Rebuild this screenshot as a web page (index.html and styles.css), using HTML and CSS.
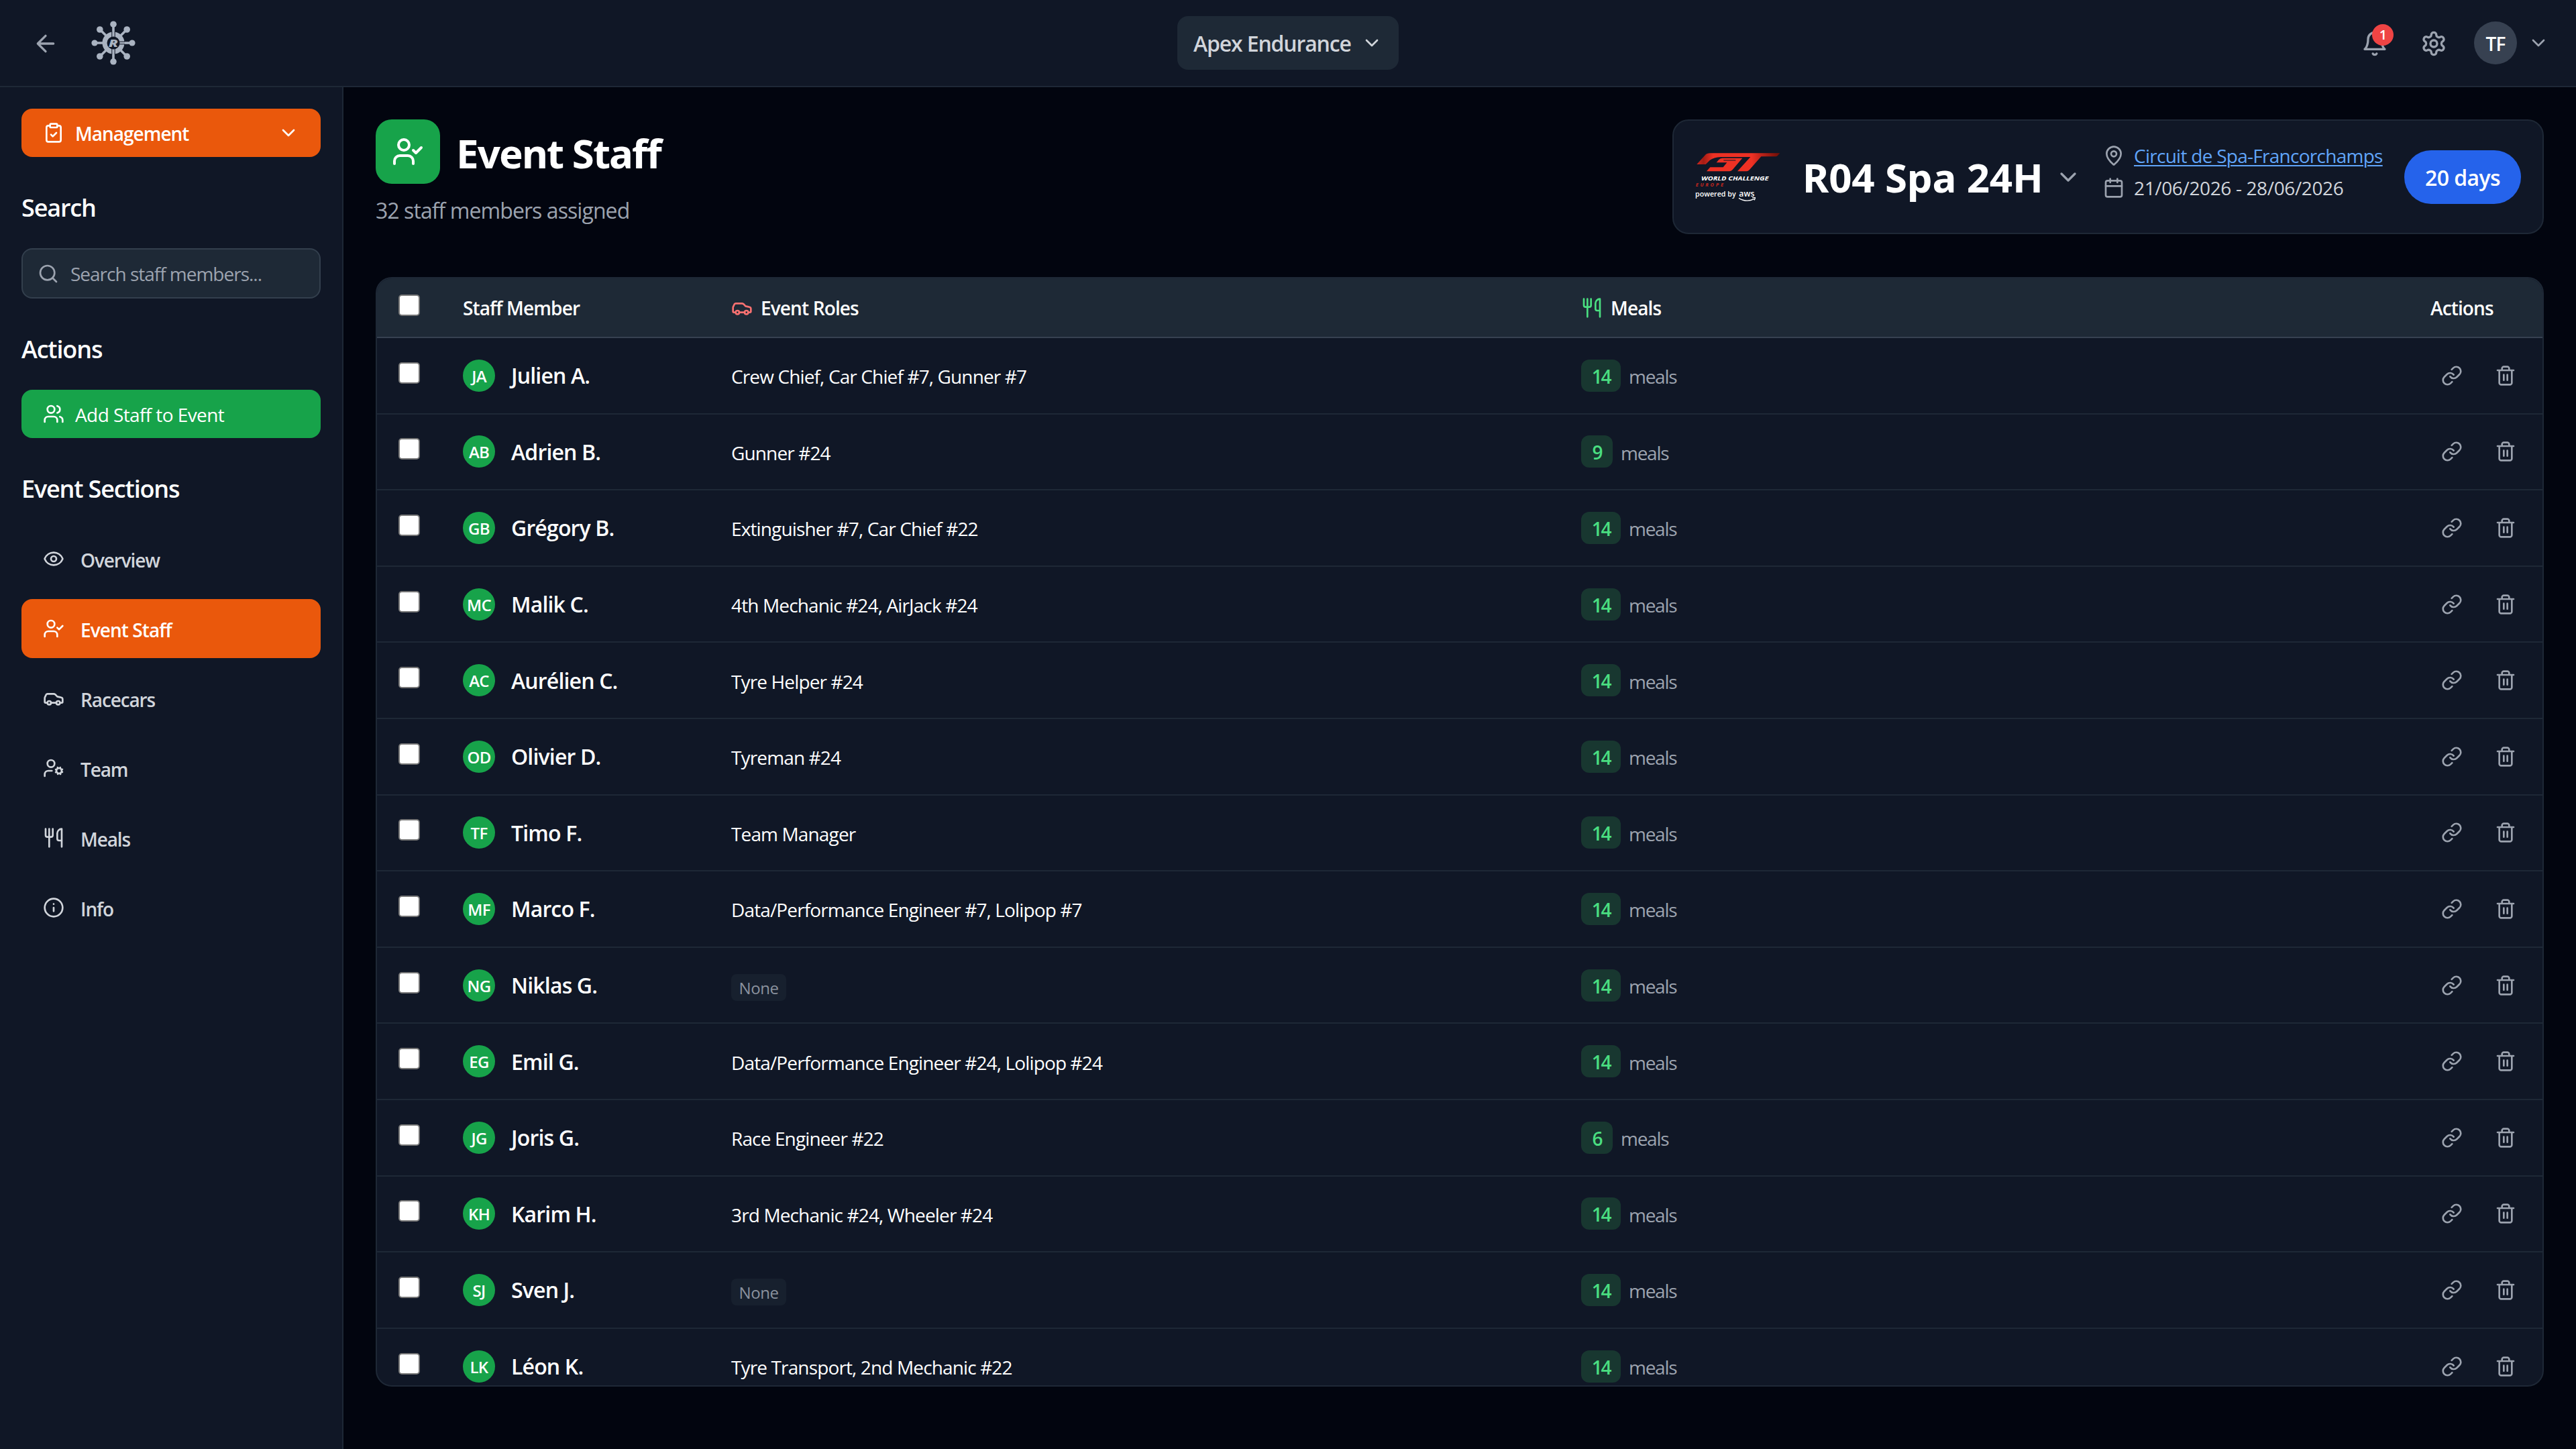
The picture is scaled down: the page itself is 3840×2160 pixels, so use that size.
FILE: index.html
```html
<!DOCTYPE html>
<html lang="en">
<head>
<meta charset="utf-8">
<title>Event Staff</title>
<link rel="stylesheet" href="styles.css">
</head>
<body>
<svg class="sprite" aria-hidden="true">
  <symbol id="i-back" viewBox="0 0 24 24"><path d="m12 19-7-7 7-7M19 12H5"/></symbol>
  <symbol id="i-down" viewBox="0 0 24 24"><path d="m6 9 6 6 6-6"/></symbol>
  <symbol id="i-bell" viewBox="0 0 24 24"><path d="M6 8a6 6 0 0 1 12 0c0 7 3 9 3 9H3s3-2 3-9M10.3 21a1.94 1.94 0 0 0 3.4 0"/></symbol>
  <symbol id="i-gear" viewBox="0 0 24 24"><path d="M12.22 2h-.44a2 2 0 0 0-2 2v.18a2 2 0 0 1-1 1.73l-.43.25a2 2 0 0 1-2 0l-.15-.08a2 2 0 0 0-2.73.73l-.22.38a2 2 0 0 0 .73 2.73l.15.1a2 2 0 0 1 1 1.72v.51a2 2 0 0 1-1 1.74l-.15.09a2 2 0 0 0-.73 2.73l.22.38a2 2 0 0 0 2.73.73l.15-.08a2 2 0 0 1 2 0l.43.25a2 2 0 0 1 1 1.73V20a2 2 0 0 0 2 2h.44a2 2 0 0 0 2-2v-.18a2 2 0 0 1 1-1.73l.43-.25a2 2 0 0 1 2 0l.15.08a2 2 0 0 0 2.73-.73l.22-.39a2 2 0 0 0-.73-2.73l-.15-.08a2 2 0 0 1-1-1.74v-.5a2 2 0 0 1 1-1.74l.15-.09a2 2 0 0 0 .73-2.73l-.22-.38a2 2 0 0 0-2.73-.73l-.15.08a2 2 0 0 1-2 0l-.43-.25a2 2 0 0 1-1-1.73V4a2 2 0 0 0-2-2z"/><circle cx="12" cy="12" r="3"/></symbol>
  <symbol id="i-clip" viewBox="0 0 24 24"><rect x="8" y="2" width="8" height="4" rx="1"/><path d="M16 4h2a2 2 0 0 1 2 2v14a2 2 0 0 1-2 2H6a2 2 0 0 1-2-2V6a2 2 0 0 1 2-2h2M9 14l2 2 4-4"/></symbol>
  <symbol id="i-search" viewBox="0 0 24 24"><circle cx="11" cy="11" r="8"/><path d="m21 21-4.3-4.3"/></symbol>
  <symbol id="i-users" viewBox="0 0 24 24"><path d="M16 21v-2a4 4 0 0 0-4-4H6a4 4 0 0 0-4 4v2M22 21v-2a4 4 0 0 0-3-3.87M16 3.13a4 4 0 0 1 0 7.75"/><circle cx="9" cy="7" r="4"/></symbol>
  <symbol id="i-eye" viewBox="0 0 24 24"><path d="M2.062 12.348a1 1 0 0 1 0-.696 10.75 10.75 0 0 1 19.876 0 1 1 0 0 1 0 .696 10.75 10.75 0 0 1-19.876 0"/><circle cx="12" cy="12" r="3"/></symbol>
  <symbol id="i-check" viewBox="0 0 24 24"><path d="M16 21v-2a4 4 0 0 0-4-4H6a4 4 0 0 0-4 4v2M16 11l2 2 4-4"/><circle cx="9" cy="7" r="4"/></symbol>
  <symbol id="i-car" viewBox="0 0 24 24"><path d="M19 17h2c.6 0 1-.4 1-1v-3c0-.9-.7-1.7-1.5-1.9C18.7 10.6 16 10 16 10s-1.3-1.4-2.2-2.3c-.5-.4-1.1-.7-1.8-.7H5c-.6 0-1.1.4-1.4.9l-1.4 2.9A3.7 3.7 0 0 0 2 12v4c0 .6.4 1 1 1h2M9 17h6"/><circle cx="7" cy="17" r="2"/><circle cx="17" cy="17" r="2"/></symbol>
  <symbol id="i-cog" viewBox="0 0 24 24"><circle cx="18" cy="15" r="3"/><circle cx="9" cy="7" r="4"/><path d="M10 15H6a4 4 0 0 0-4 4v2M21.7 16.4l-.9-.3M15.2 13.9l-.9-.3M16.6 18.7l.3-.9M19.1 12.2l.3-.9M19.6 18.7l-.4-1M16.8 12.3l-.4-1M14.3 16.6l1-.4M20.7 13.8l1-.4"/></symbol>
  <symbol id="i-food" viewBox="0 0 24 24"><path d="M3 2v7c0 1.1.9 2 2 2h4a2 2 0 0 0 2-2V2M7 2v20M21 15V2a5 5 0 0 0-5 5v6c0 1.1.9 2 2 2h3Zm0 0v7"/></symbol>
  <symbol id="i-info" viewBox="0 0 24 24"><circle cx="12" cy="12" r="10"/><path d="M12 16v-4M12 8h.01"/></symbol>
  <symbol id="i-pin" viewBox="0 0 24 24"><path d="M20 10c0 4.993-5.539 10.193-7.399 11.799a1 1 0 0 1-1.202 0C9.539 20.193 4 14.993 4 10a8 8 0 0 1 16 0"/><circle cx="12" cy="10" r="3"/></symbol>
  <symbol id="i-cal" viewBox="0 0 24 24"><path d="M8 2v4M16 2v4M3 10h18"/><rect x="3" y="4" width="18" height="18" rx="2"/></symbol>
  <symbol id="i-link" viewBox="0 0 24 24"><path d="M10 13a5 5 0 0 0 7.54.54l3-3a5 5 0 0 0-7.07-7.07l-1.72 1.71"/><path d="M14 11a5 5 0 0 0-7.54-.54l-3 3a5 5 0 0 0 7.07 7.07l1.71-1.71"/></symbol>
  <symbol id="i-trash" viewBox="0 0 24 24"><path d="M3 6h18M19 6v14c0 1-1 2-2 2H7c-1 0-2-1-2-2V6M8 6V4c0-1 1-2 2-2h4c1 0 2 1 2 2v2M10 11v6M14 11v6"/></symbol>
</svg>

<header class="topbar">
  <div class="topbar-left">
    <svg class="icon icon-md"><use href="#i-back"/></svg>
    <svg class="brand" viewBox="0 0 66 66">
      <g stroke="#aab3c1" stroke-width="3.6"><path d="M33 4V21M33 45V62M5 33H21M44 33H61M12.5 12.5 24 24M42 42 53.5 53.5M53.5 12.5 42 24M24 42 12.5 53.5"/></g>
      <circle cx="33" cy="33" r="13" fill="none" stroke="#aab3c1" stroke-width="7"/>
      <path d="M30.8 16V25M35.2 16V25M30.8 41V50M35.2 41V50M42 31.2H50M42 34.8H50" stroke="#101726" stroke-width="1"/>
      <g fill="#aab3c1"><circle cx="33" cy="5.2" r="4.8"/><circle cx="33" cy="60.8" r="4.8"/><circle cx="5" cy="33" r="4.6"/><circle cx="61" cy="33" r="4.6"/><circle cx="12.8" cy="13" r="4.8"/><circle cx="53.2" cy="13" r="4.8"/><circle cx="12.8" cy="53" r="4.8"/><circle cx="53.2" cy="53" r="4.8"/></g>
      <text x="33" y="38.6" textLength="14" lengthAdjust="spacingAndGlyphs" class="brand-letter">R</text>
    </svg>
  </div>
  <button class="team-switch"><span class="team-name">Apex Endurance</span><svg class="icon"><use href="#i-down"/></svg></button>
  <div class="topbar-right">
    <div class="bell"><svg class="icon icon-md"><use href="#i-bell"/></svg><span class="bell-count">1</span></div>
    <svg class="icon icon-md gear"><use href="#i-gear"/></svg>
    <span class="me">TF</span>
    <svg class="icon"><use href="#i-down"/></svg>
  </div>
</header>

<div class="body">
  <aside class="sidebar">
    <button class="side-btn orange"><svg class="icon"><use href="#i-clip"/></svg><span class="grow">Management</span><svg class="icon"><use href="#i-down"/></svg></button>
    <h2>Search</h2>
    <div class="search"><svg class="icon"><use href="#i-search"/></svg><span>Search staff members...</span></div>
    <h2>Actions</h2>
    <button class="side-btn green"><svg class="icon"><use href="#i-users"/></svg><span>Add Staff to Event</span></button>
    <h2>Event Sections</h2>
    <nav class="nav">
      <a class="nav-item"><svg class="icon"><use href="#i-eye"/></svg><span>Overview</span></a>
      <a class="nav-item active"><svg class="icon"><use href="#i-check"/></svg><span>Event Staff</span></a>
      <a class="nav-item"><svg class="icon"><use href="#i-car"/></svg><span>Racecars</span></a>
      <a class="nav-item"><svg class="icon"><use href="#i-cog"/></svg><span>Team</span></a>
      <a class="nav-item"><svg class="icon"><use href="#i-food"/></svg><span>Meals</span></a>
      <a class="nav-item"><svg class="icon"><use href="#i-info"/></svg><span>Info</span></a>
    </nav>
  </aside>

  <main class="main">
    <div class="page-head">
      <div>
        <div class="title-row">
          <span class="title-icon"><svg class="icon icon-lg"><use href="#i-check"/></svg></span>
          <h1>Event Staff</h1>
        </div>
        <p class="subtitle">32 staff members assigned</p>
      </div>
      <section class="event-card">
        <svg class="series" viewBox="51 69 384 240">
          <defs>
            <linearGradient id="gt" x1="0" x2="1" y1="0" y2="0">
              <stop offset="0" stop-color="#d3281f"/><stop offset=".08" stop-color="#a31c14"/><stop offset=".2" stop-color="#ee3124"/><stop offset=".66" stop-color="#ee3124"/><stop offset=".76" stop-color="#c4251b"/><stop offset="1" stop-color="#6d0d05"/>
            </linearGradient>
          </defs>
          <path fill="url(#gt)" d="M58 132 94 92Q103 82 118 82H430L419 94Q416 97 412 97H346L294 156Q288 163 280 163H240L298 99H165Q134 100 116 114L98 132Z"/>
          <path fill="#ee3124" d="M172 104H262L218 156Q212 163 203 163H102L118 145H176L193 124H146L156 112Q162 104 172 104Z"/>
          <path stroke="#101726" stroke-width="3" d="M178 114H232"/>
          <text x="78" y="203" class="s-world" textLength="301" lengthAdjust="spacingAndGlyphs">WORLD CHALLENGE</text>
          <text x="53" y="230" class="s-europe" textLength="124" lengthAdjust="spacing">EUROPE</text>
          <text x="51" y="275" class="s-pow" textLength="182" lengthAdjust="spacingAndGlyphs">powered by</text>
          <text x="247" y="275" class="s-aws" textLength="69" lengthAdjust="spacingAndGlyphs">aws</text>
          <path fill="none" stroke="#fff" stroke-width="4" d="M246 283Q280 304 314 287M306 281H319Q319 286 315 292"/>
        </svg>
        <span class="event-name">R04 Spa 24H</span>
        <svg class="icon icon-md event-caret"><use href="#i-down"/></svg>
        <div class="event-meta">
          <div><svg class="icon"><use href="#i-pin"/></svg><a class="circuit">Circuit de Spa-Francorchamps</a></div>
          <div><svg class="icon"><use href="#i-cal"/></svg><span class="dates">21/06/2026 - 28/06/2026</span></div>
        </div>
        <span class="days">20 days</span>
      </section>
    </div>

    <section class="table">
      <div class="row head">
        <input type="checkbox"><span>Staff Member</span>
        <span class="th"><svg class="icon red"><use href="#i-car"/></svg>Event Roles</span>
        <span class="th meals-th"><svg class="icon lime"><use href="#i-food"/></svg>Meals</span>
        <span>Actions</span>
      </div>
      <div class="row"><input type="checkbox"><div class="who"><i>JA</i>Julien A.</div><div class="roles">Crew Chief, Car Chief #7, Gunner #7</div><div class="meals"><b>14</b><span>meals</span></div><div class="acts"><svg class="icon"><use href="#i-link"/></svg><svg class="icon"><use href="#i-trash"/></svg></div></div>
      <div class="row"><input type="checkbox"><div class="who"><i>AB</i>Adrien B.</div><div class="roles">Gunner #24</div><div class="meals"><b class="one">9</b><span>meals</span></div><div class="acts"><svg class="icon"><use href="#i-link"/></svg><svg class="icon"><use href="#i-trash"/></svg></div></div>
      <div class="row"><input type="checkbox"><div class="who"><i>GB</i>Grégory B.</div><div class="roles">Extinguisher #7, Car Chief #22</div><div class="meals"><b>14</b><span>meals</span></div><div class="acts"><svg class="icon"><use href="#i-link"/></svg><svg class="icon"><use href="#i-trash"/></svg></div></div>
      <div class="row"><input type="checkbox"><div class="who"><i>MC</i>Malik C.</div><div class="roles">4th Mechanic #24, AirJack #24</div><div class="meals"><b>14</b><span>meals</span></div><div class="acts"><svg class="icon"><use href="#i-link"/></svg><svg class="icon"><use href="#i-trash"/></svg></div></div>
      <div class="row"><input type="checkbox"><div class="who"><i>AC</i>Aurélien C.</div><div class="roles">Tyre Helper #24</div><div class="meals"><b>14</b><span>meals</span></div><div class="acts"><svg class="icon"><use href="#i-link"/></svg><svg class="icon"><use href="#i-trash"/></svg></div></div>
      <div class="row"><input type="checkbox"><div class="who"><i>OD</i>Olivier D.</div><div class="roles">Tyreman #24</div><div class="meals"><b>14</b><span>meals</span></div><div class="acts"><svg class="icon"><use href="#i-link"/></svg><svg class="icon"><use href="#i-trash"/></svg></div></div>
      <div class="row"><input type="checkbox"><div class="who"><i>TF</i>Timo F.</div><div class="roles">Team Manager</div><div class="meals"><b>14</b><span>meals</span></div><div class="acts"><svg class="icon"><use href="#i-link"/></svg><svg class="icon"><use href="#i-trash"/></svg></div></div>
      <div class="row"><input type="checkbox"><div class="who"><i>MF</i>Marco F.</div><div class="roles">Data/Performance Engineer #7, Lolipop #7</div><div class="meals"><b>14</b><span>meals</span></div><div class="acts"><svg class="icon"><use href="#i-link"/></svg><svg class="icon"><use href="#i-trash"/></svg></div></div>
      <div class="row"><input type="checkbox"><div class="who"><i>NG</i>Niklas G.</div><div class="none">None</div><div class="meals"><b>14</b><span>meals</span></div><div class="acts"><svg class="icon"><use href="#i-link"/></svg><svg class="icon"><use href="#i-trash"/></svg></div></div>
      <div class="row"><input type="checkbox"><div class="who"><i>EG</i>Emil G.</div><div class="roles">Data/Performance Engineer #24, Lolipop #24</div><div class="meals"><b>14</b><span>meals</span></div><div class="acts"><svg class="icon"><use href="#i-link"/></svg><svg class="icon"><use href="#i-trash"/></svg></div></div>
      <div class="row"><input type="checkbox"><div class="who"><i>JG</i>Joris G.</div><div class="roles">Race Engineer #22</div><div class="meals"><b class="one">6</b><span>meals</span></div><div class="acts"><svg class="icon"><use href="#i-link"/></svg><svg class="icon"><use href="#i-trash"/></svg></div></div>
      <div class="row"><input type="checkbox"><div class="who"><i>KH</i>Karim H.</div><div class="roles">3rd Mechanic #24, Wheeler #24</div><div class="meals"><b>14</b><span>meals</span></div><div class="acts"><svg class="icon"><use href="#i-link"/></svg><svg class="icon"><use href="#i-trash"/></svg></div></div>
      <div class="row"><input type="checkbox"><div class="who"><i>SJ</i>Sven J.</div><div class="none">None</div><div class="meals"><b>14</b><span>meals</span></div><div class="acts"><svg class="icon"><use href="#i-link"/></svg><svg class="icon"><use href="#i-trash"/></svg></div></div>
      <div class="row"><input type="checkbox"><div class="who"><i>LK</i>Léon K.</div><div class="roles">Tyre Transport, 2nd Mechanic #22</div><div class="meals"><b>14</b><span>meals</span></div><div class="acts"><svg class="icon"><use href="#i-link"/></svg><svg class="icon"><use href="#i-trash"/></svg></div></div>
    </section>
  </main>
</div>
</body>
</html>
```
FILE: styles.css
```css
*, *::before, *::after { box-sizing: border-box; }

body {
  margin: 0;
  width: 3840px;
  height: 2160px;
  overflow: hidden;
  display: flex;
  flex-direction: column;
  background: #02050f;
  color: #fff;
  font-family: "Open Sans", "Noto Sans", sans-serif;
  font-size: 28px;
  letter-spacing: -0.031em;
  white-space: nowrap;
}

h1, h2, p { margin: 0; }
button { border: 0; font: inherit; letter-spacing: inherit; color: inherit; }

.sprite { display: none; }

.icon {
  flex: none;
  width: 32px;
  height: 32px;
  fill: none;
  stroke: currentColor;
  stroke-width: 2;
  stroke-linecap: round;
  stroke-linejoin: round;
}
.icon-md { width: 40px; height: 40px; }
.icon-lg { width: 48px; height: 48px; }

/* Top bar */
.topbar {
  flex: none;
  height: 130px;
  display: grid;
  grid-template-columns: 1fr auto 1fr;
  align-items: center;
  padding: 0 40px 0 48px;
  background: #101726;
  border-bottom: 2px solid #1e2836;
  color: #9ca3af;
}
.topbar-left { display: flex; align-items: center; gap: 48px; }
.topbar-left .icon { margin-top: 2px; }
.brand { width: 66px; height: 66px; }
.brand-letter {
  font: italic 800 15px "Open Sans", sans-serif;
  letter-spacing: 0;
  text-anchor: middle;
  fill: #aab3c1;
}
.team-switch {
  width: 330px;
  height: 80px;
  margin: 0 4px 0 -4px;
  display: flex;
  align-items: center;
  justify-content: space-between;
  padding: 0 24px;
  border-radius: 16px;
  background: #1e2936;
  color: #d1d5db;
  font-size: 32px;
  font-weight: 600;
}
.team-name { padding-top: 1px; letter-spacing: -0.036em; }
.topbar-right { display: flex; align-items: center; justify-content: flex-end; }
.bell { position: relative; height: 40px; margin: 2px 48px 0 0; }
.bell .icon { display: block; }
.bell-count {
  position: absolute;
  left: 16px;
  top: -9px;
  width: 32px;
  height: 32px;
  border-radius: 50%;
  background: #ef4444;
  color: #fff;
  font-size: 20px;
  font-weight: 600;
  line-height: 31px;
  text-align: center;
}
.gear { margin: 2px 40px 0 0; }
.me {
  width: 64px;
  height: 64px;
  margin-right: 16px;
  border-radius: 50%;
  background: #374151;
  color: #fff;
  font-weight: 600;
  line-height: 67px;
  text-align: center;
}

/* Sidebar */
.body { flex: 1; min-height: 0; display: flex; }
.sidebar {
  flex: none;
  width: 512px;
  padding: 32px;
  display: flex;
  flex-direction: column;
  background: #101726;
  border-right: 2px solid #1e2836;
}
.sidebar h2 {
  margin: 48px 0 32px;
  font-size: 36px;
  font-weight: 600;
  line-height: 56px;
  letter-spacing: -0.032em;
}
.side-btn {
  height: 72px;
  display: flex;
  align-items: center;
  gap: 16px;
  padding: 0 32px;
  border-radius: 16px;
  text-align: left;
}
.side-btn span { padding-top: 2px; }
.grow { flex: 1; font-weight: 600; letter-spacing: -0.036em; }
.orange { background: #ea580c; }
.green { background: #17a34a; letter-spacing: -0.021em; }
.search {
  height: 75px;
  display: flex;
  align-items: center;
  gap: 17px;
  padding: 0 22px;
  border: 2px solid #333f4d;
  border-radius: 16px;
  background: #1e2936;
  color: #9ca3af;
  letter-spacing: -0.036em;
}
.nav { display: flex; flex-direction: column; gap: 16px; }
.nav-item {
  height: 88px;
  display: flex;
  align-items: center;
  gap: 24px;
  padding: 0 32px;
  border-radius: 16px;
  color: #d1d5db;
  font-weight: 600;
  letter-spacing: -0.04em;
}
.nav-item span { padding-top: 3px; }
.nav-item.active { background: #ea580c; color: #fff; letter-spacing: -0.033em; }

/* Page heading */
.main { flex: 1; padding: 48px 48px 0; }
.page-head {
  height: 235px;
  display: flex;
  align-items: flex-start;
  justify-content: space-between;
}
.title-row { display: flex; align-items: center; gap: 24px; }
.title-icon {
  width: 96px;
  height: 96px;
  display: grid;
  place-items: center;
  border-radius: 24px;
  background: #17a34a;
}
h1, .event-name { font-family: "Noto Sans", "Open Sans", sans-serif; font-size: 60px; font-weight: 700; }
h1 { padding-top: 4px; line-height: 80px; letter-spacing: -0.032em; }
.subtitle { margin-top: 16px; font-size: 32px; line-height: 48px; color: #9ca3af; letter-spacing: -0.029em; }

.event-card {
  width: 1299px;
  height: 171px;
  display: flex;
  align-items: center;
  padding: 0 32px;
  border: 2px solid #1e2836;
  border-radius: 24px;
  background: #101726;
}
.series { width: 128px; height: 80px; margin-right: 32px; }
.series text { letter-spacing: 0; }
.s-world { font: italic 700 28px "Open Sans", sans-serif; fill: #fff; }
.s-europe { font: italic 700 22px "Open Sans", sans-serif; fill: #c8271f; }
.s-pow { font: 600 33px "Open Sans", sans-serif; fill: #fff; }
.s-aws { font: 600 40px "Open Sans", sans-serif; fill: #fff; }
.event-name { width: 376px; letter-spacing: -0.003em; }
.event-caret { margin-right: 32px; color: #9ca3af; }
.event-meta { width: 449px; margin-bottom: 15px; display: flex; flex-direction: column; gap: 8px; }
.event-meta div { height: 40px; display: flex; align-items: center; gap: 14px; }
.event-meta .icon { color: #9ca3af; }
.circuit { color: #60a5fa; letter-spacing: -0.026em; text-decoration: underline; text-decoration-thickness: 2px; text-underline-offset: 3px; }
.dates { color: #d1d5db; letter-spacing: -0.013em; }
.days {
  flex: 1;
  height: 80px;
  border-radius: 40px;
  background: #2563eb;
  font-size: 32px;
  font-weight: 600;
  line-height: 82px;
  text-align: center;
  letter-spacing: -0.018em;
}

/* Staff table */
.table {
  height: 1654px;
  overflow: hidden;
  border: 2px solid #1e2836;
  border-radius: 24px;
  background: #101726;
}
.row {
  height: 113.6px;
  display: grid;
  grid-template-columns: 96px 400px 1267px 1266px 1fr;
  align-items: center;
  padding-left: 32px;
  border-bottom: 2px solid #1e2836;
}
.head {
  height: 89px;
  background: #1e2936;
  border-color: #374151;
  font-weight: 600;
}
.row input {
  appearance: none;
  width: 32px;
  height: 32px;
  margin: 0 0 8px;
  border: 2px solid #767676;
  border-radius: 5px;
  background: #fff;
}
.th { display: flex; align-items: center; gap: 12px; }
.red { color: #f87171; }
.lime { color: #4ade80; }
.who {
  display: flex;
  align-items: center;
  gap: 24px;
  font-size: 32px;
  font-weight: 600;
  letter-spacing: -0.026em;
}
.who i {
  width: 48px;
  height: 48px;
  border-radius: 50%;
  background: #17a34a;
  font-size: 24px;
  font-style: normal;
  line-height: 49px;
  text-align: center;
  letter-spacing: -0.03em;
}
.roles { padding-top: 3px; }
.none {
  justify-self: start;
  width: 82px;
  height: 40px;
  margin-top: 7px;
  border-radius: 8px;
  background: #17202e;
  color: #8b929e;
  font-size: 24px;
  line-height: 41px;
  text-align: center;
  letter-spacing: -0.02em;
}
.meals { display: flex; align-items: center; gap: 12px; color: #9ca3af; }
.meals b {
  width: 59px;
  height: 48px;
  border-radius: 12px;
  background: #183730;
  color: #4ade80;
  font-weight: 600;
  line-height: 51px;
  text-align: center;
  letter-spacing: -0.08em;
}
.meals .one { width: 47px; }
.meals span { padding-top: 3px; letter-spacing: -0.045em; }
.acts { display: flex; gap: 48px; padding-left: 16px; color: #9ca3af; }
```
